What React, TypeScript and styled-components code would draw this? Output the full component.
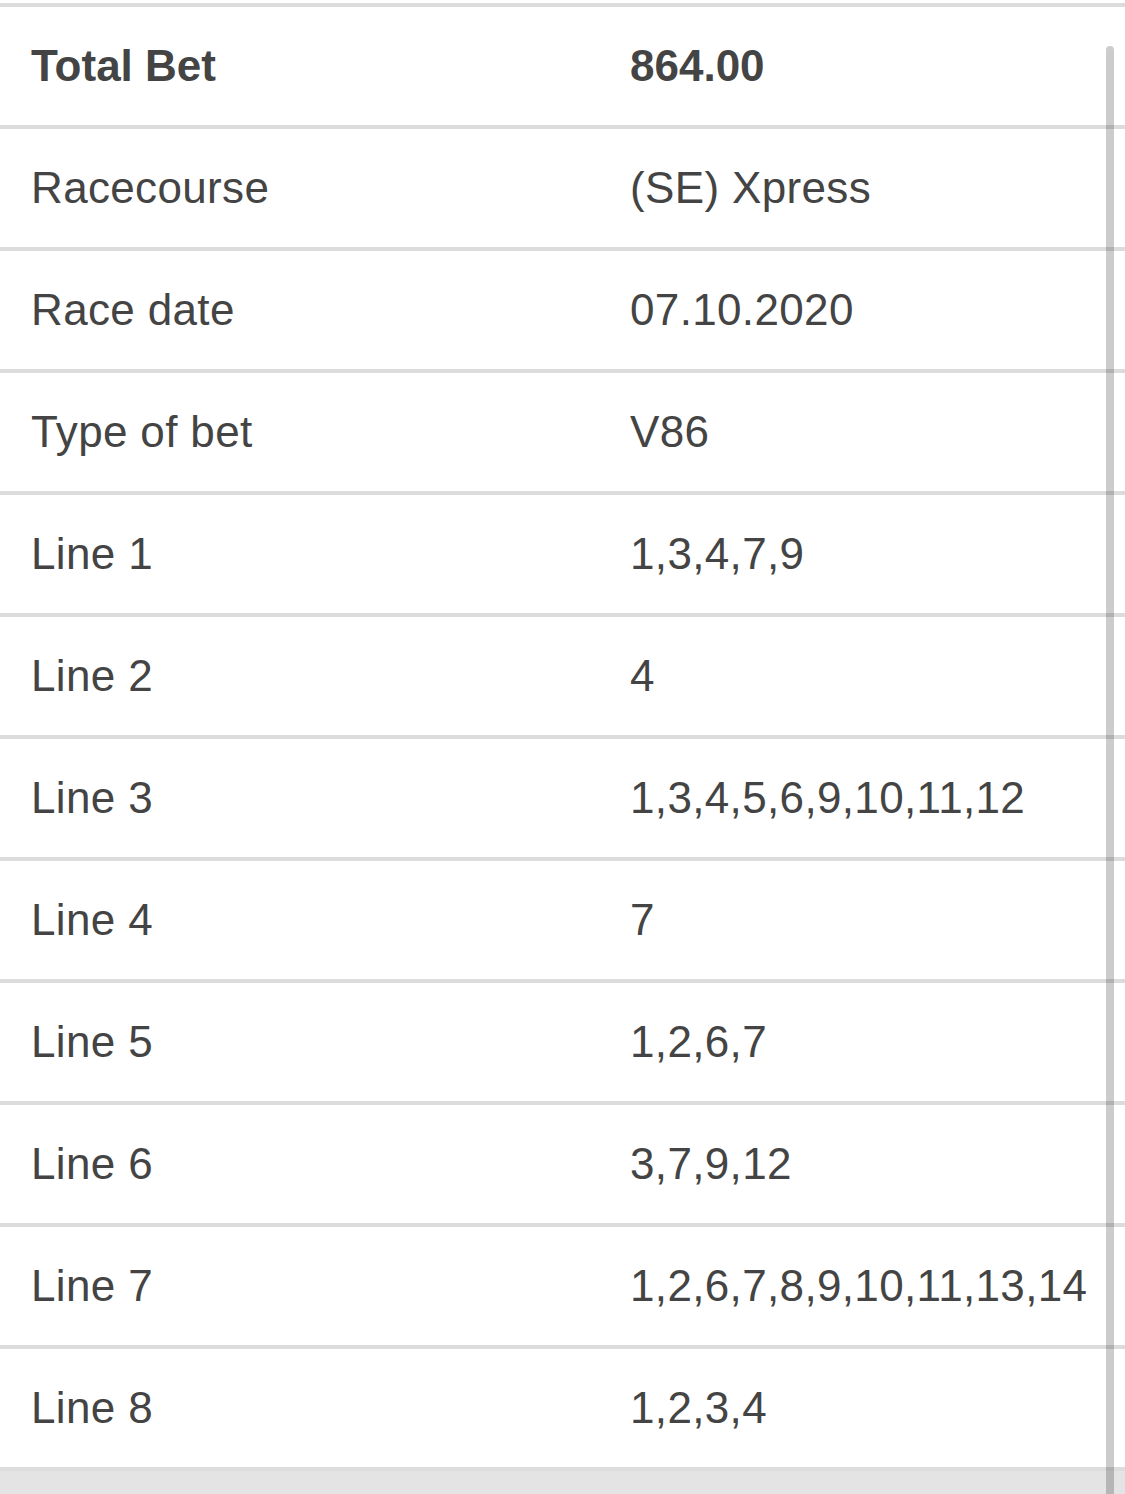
import { createGlobalStyle, styled } from "styled-components";

const GlobalStyle = createGlobalStyle`
  html, body {
    margin: 0;
    padding: 0;
    background: #fff;
  }
  body {
    font-family: "Liberation Sans", Arial, Helvetica, sans-serif;
    color: #444;
  }
`;

const Page = styled.div`
  position: relative;
  width: 1125px;
  height: 1494px;
  overflow: hidden;
  padding-top: 3px;
  box-sizing: border-box;
`;

const Table = styled.div`
  border-top: 4px solid #dcdcdc;
`;

const Row = styled.div`
  display: grid;
  grid-template-columns: 599px 1fr;
  align-items: center;
  height: 118px;
  padding-left: 31px;
  border-bottom: 4px solid #dcdcdc;
`;

const Cell = styled.div<{ $bold?: boolean }>`
  font-size: 44px;
  line-height: 1;
  letter-spacing: ${({ $bold }) => ($bold ? "0" : "0.35px")};
  font-weight: ${({ $bold }) => ($bold ? 700 : 400)};
  color: #444;
  white-space: nowrap;
`;

const Footer = styled.div`
  height: 30px;
  background: #e4e4e4;
`;

const Scrollbar = styled.div`
  position: absolute;
  top: 46px;
  bottom: -10px;
  left: 1106px;
  width: 8px;
  border-radius: 4px;
  background: rgba(0, 0, 0, 0.2);
`;

const rows: { label: string; value: string; bold?: boolean }[] = [
  { label: "Total Bet", value: "864.00", bold: true },
  { label: "Racecourse", value: "(SE) Xpress" },
  { label: "Race date", value: "07.10.2020" },
  { label: "Type of bet", value: "V86" },
  { label: "Line 1", value: "1,3,4,7,9" },
  { label: "Line 2", value: "4" },
  { label: "Line 3", value: "1,3,4,5,6,9,10,11,12" },
  { label: "Line 4", value: "7" },
  { label: "Line 5", value: "1,2,6,7" },
  { label: "Line 6", value: "3,7,9,12" },
  { label: "Line 7", value: "1,2,6,7,8,9,10,11,13,14" },
  { label: "Line 8", value: "1,2,3,4" },
];

function App() {
  return (
    <>
      <GlobalStyle />
      <Page>
        <Table>
          {rows.map((r) => (
            <Row key={r.label}>
              <Cell $bold={r.bold}>{r.label}</Cell>
              <Cell $bold={r.bold}>{r.value}</Cell>
            </Row>
          ))}
        </Table>
        <Footer />
        <Scrollbar />
      </Page>
    </>
  );
}

export default App;
